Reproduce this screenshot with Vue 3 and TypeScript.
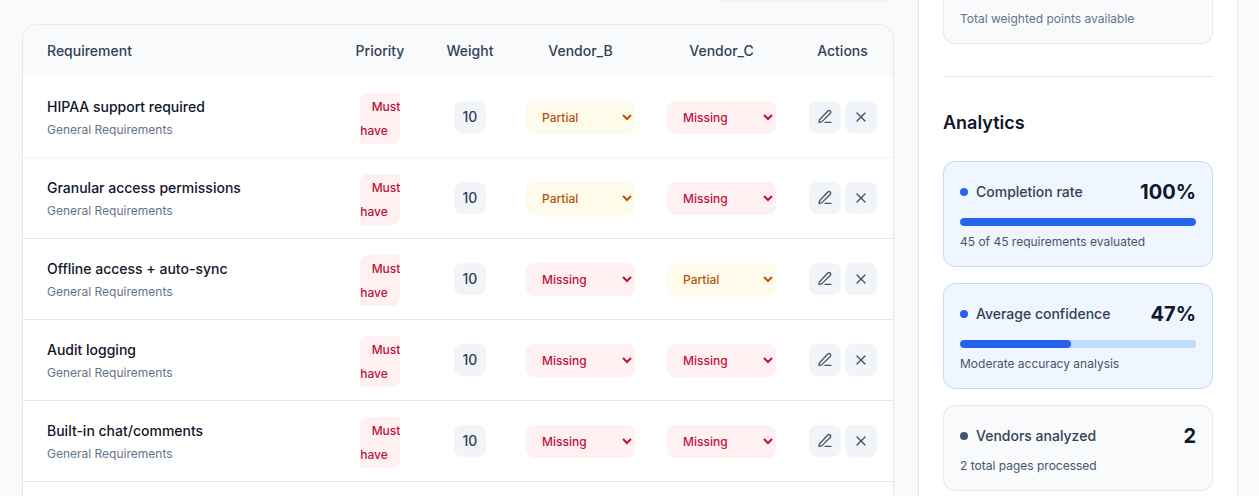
<script setup lang="ts">
import { ref } from 'vue'

type Status = 'Partial' | 'Missing' | 'Met'

interface Requirement {
  title: string
  category: string
  priority: string
  weight: number
  scores: Record<string, Status>
}

interface Metric {
  label: string
  value: string
  note: string
  percent?: number
}

const statuses: Status[] = ['Met', 'Partial', 'Missing']
const vendors = ['Vendor_B', 'Vendor_C']

function requirement(title: string, b: Status, c: Status): Requirement {
  return {
    title,
    category: 'General Requirements',
    priority: 'Must have',
    weight: 10,
    scores: { Vendor_B: b, Vendor_C: c },
  }
}

const requirements = ref<Requirement[]>([
  requirement('HIPAA support required', 'Partial', 'Missing'),
  requirement('Granular access permissions', 'Partial', 'Missing'),
  requirement('Offline access + auto-sync', 'Missing', 'Partial'),
  requirement('Audit logging', 'Missing', 'Missing'),
  requirement('Built-in chat/comments', 'Missing', 'Missing'),
])

const metrics: Metric[] = [
  { label: 'Completion rate', value: '100%', note: '45 of 45 requirements evaluated', percent: 100 },
  { label: 'Average confidence', value: '47%', note: 'Moderate accuracy analysis', percent: 47 },
  { label: 'Vendors analyzed', value: '2', note: '2 total pages processed' },
]

function remove(index: number) {
  requirements.value.splice(index, 1)
}
</script>

<template>
  <div class="page">
    <main class="main">
      <div class="toolbar"><div class="toolbar-edge"></div></div>
      <section class="table-card">
        <table>
          <colgroup>
            <col />
            <col class="col-priority" />
            <col class="col-weight" />
            <col v-for="v in vendors" :key="v" class="col-vendor" />
            <col class="col-actions" />
          </colgroup>
          <thead>
            <tr>
              <th class="first" scope="col">Requirement</th>
              <th scope="col">Priority</th>
              <th scope="col">Weight</th>
              <th v-for="v in vendors" :key="v" scope="col">{{ v }}</th>
              <th scope="col">Actions</th>
            </tr>
          </thead>
          <tbody>
            <tr v-for="(r, i) in requirements" :key="r.title">
              <td class="first">
                <div class="title">{{ r.title }}</div>
                <div class="category">{{ r.category }}</div>
              </td>
              <td class="priority-cell"><span class="priority">{{ r.priority }}</span></td>
              <td><div class="weight">{{ r.weight }}</div></td>
              <td v-for="v in vendors" :key="v">
                <select
                  v-model="r.scores[v]"
                  class="status"
                  :class="r.scores[v].toLowerCase()"
                  :aria-label="`${v}: ${r.title}`"
                >
                  <option v-for="s in statuses" :key="s" :value="s">{{ s }}</option>
                </select>
              </td>
              <td>
                <div class="actions">
                  <button type="button" :aria-label="`Edit ${r.title}`">
                    <svg viewBox="0 0 24 24" aria-hidden="true">
                      <path d="M12 20h9" />
                      <path d="M16.1 3.1a2.6 2.6 0 0 1 3.7 3.7L7 19.3l-4 .9.9-4Z" />
                    </svg>
                  </button>
                  <button type="button" :aria-label="`Remove ${r.title}`" @click="remove(i)">
                    <svg viewBox="0 0 24 24" aria-hidden="true">
                      <path d="M18 6 6 18" />
                      <path d="m6 6 12 12" />
                    </svg>
                  </button>
                </div>
              </td>
            </tr>
          </tbody>
        </table>
      </section>
    </main>

    <aside class="sidebar">
      <div class="metric summary">
        <p class="note">Total weighted points available</p>
      </div>
      <section class="analytics">
        <h2>Analytics</h2>
        <div class="metrics">
          <div
            v-for="m in metrics"
            :key="m.label"
            class="metric"
            :class="{ highlighted: m.percent !== undefined }"
          >
            <div class="metric-head">
              <span class="dot"></span>
              <span class="metric-label">{{ m.label }}</span>
              <strong>{{ m.value }}</strong>
            </div>
            <div
              v-if="m.percent !== undefined"
              class="bar"
              role="progressbar"
              :aria-label="m.label"
              :aria-valuenow="m.percent"
              aria-valuemin="0"
              aria-valuemax="100"
            >
              <div class="bar-fill" :style="{ width: m.percent + '%' }"></div>
            </div>
            <p class="note">{{ m.note }}</p>
          </div>
        </div>
      </section>
    </aside>
  </div>
</template>

<style>
body {
  margin: 0;
  background: #f8fafc;
}
</style>

<style scoped>
.page,
.page * {
  box-sizing: border-box;
}

.page {
  display: flex;
  gap: 24px;
  height: 100vh;
  padding: 0 21px 0 22px;
  overflow: hidden;
  background: #f8fafc;
  color: #0f172a;
  font-family: Inter, 'Liberation Sans', sans-serif;
  font-size: 14px;
  line-height: 20px;
}

.main {
  display: flex;
  flex: 1;
  flex-direction: column;
  min-width: 0;
}

.toolbar {
  display: flex;
  flex: none;
  justify-content: flex-end;
  height: 24px;
  padding-right: 4px;
}

.toolbar-edge {
  width: 176px;
  height: 1px;
  border-radius: 0 0 8px 8px;
  background: #f1f3f6;
}

.table-card {
  flex: 1 0 auto;
  overflow: hidden;
  border: 1px solid #e2e8f0;
  border-bottom: 0;
  border-radius: 16px 16px 0 0;
  background: #fff;
}

table {
  width: 100%;
  border-spacing: 0;
  table-layout: fixed;
}

.col-priority {
  width: 100px;
}

.col-weight {
  width: 80px;
}

.col-vendor {
  width: 141px;
}

.col-actions {
  width: 101px;
}

th {
  padding: 16px;
  background: #f8fafc;
  color: #334155;
  font-weight: 500;
  text-align: center;
}

td {
  height: 81px;
  padding: 16px;
  border-bottom: 1px solid #e5e7eb;
  text-align: center;
  vertical-align: middle;
}

tbody tr:first-child td {
  border-bottom-color: #f1f5f9;
}

th.first,
td.first {
  padding-left: 24px;
  text-align: left;
}

td.first {
  padding-top: 18px;
}

.title {
  font-weight: 500;
  line-height: 24px;
}

.category {
  color: #64748b;
  font-size: 12px;
  line-height: 22px;
}

.priority-cell {
  padding: 18px 24px 14px;
  font-size: 12px;
  font-weight: 500;
  line-height: 24px;
}

.priority {
  padding: 6px 12px;
  border-radius: 8px;
  background: #fff1f2;
  color: #be123c;
}

.weight {
  width: 32px;
  margin: 0 auto;
  border-radius: 8px;
  background: #f1f5f9;
  color: #334155;
  font-weight: 500;
  line-height: 32px;
}

.status {
  display: block;
  width: 100%;
  height: 33px;
  padding: 8px 12px;
  border: 0;
  border-radius: 8px;
  font-family: inherit;
  font-size: 12px;
  font-weight: 500;
}

.partial {
  background-color: #fffbeb;
  color: #b45309;
}

.missing {
  background-color: #fff1f2;
  color: #be123c;
}

.met {
  background-color: #ecfdf5;
  color: #047857;
}

.actions {
  display: flex;
  justify-content: center;
  gap: 4px;
}

.actions button {
  display: grid;
  flex: none;
  width: 32px;
  height: 32px;
  padding: 0;
  border: 0;
  border-radius: 8px;
  background: #f1f5f9;
  color: #475569;
  place-items: center;
}

.actions svg {
  width: 16px;
  height: 16px;
  fill: none;
  stroke: currentColor;
  stroke-linecap: round;
  stroke-linejoin: round;
  stroke-width: 2;
}

.sidebar {
  flex: none;
  width: 320px;
  padding: 0 24px;
  border: solid #e2e8f0;
  border-width: 0 1px;
  background: #fff;
}

.metric {
  padding: 16px;
  border: 1px solid #e2e8f0;
  border-radius: 12px;
  background: #f8fafc;
}

.metric.highlighted {
  border-color: #bfdbfe;
  background: #eff6ff;
}

.metric.summary {
  padding: 3px 16px 16px;
  border-top: 0;
  border-radius: 0 0 12px 12px;
}

.note {
  margin: 8px 0 0;
  color: #475569;
  font-size: 12px;
  line-height: 16px;
}

.summary .note {
  color: #64748b;
}

.analytics {
  margin-top: 32px;
  padding-top: 32px;
  border-top: 1px solid #e2e8f0;
}

h2 {
  margin: 0 0 24px;
  font-size: 18px;
  font-weight: 600;
  line-height: 28px;
}

.metrics {
  display: grid;
  gap: 16px;
}

.metric-head {
  display: flex;
  align-items: center;
  gap: 8px;
  line-height: 28px;
}

.dot {
  width: 8px;
  height: 8px;
  border-radius: 50%;
  background: #475569;
}

.highlighted .dot {
  background: #2563eb;
}

.metric-label {
  flex: 1;
  color: #334155;
  font-weight: 500;
}

.metric-head strong {
  font-size: 20px;
  font-weight: 700;
}

.bar {
  height: 8px;
  margin-top: 12px;
  overflow: hidden;
  border-radius: 4px;
  background: #bfdbfe;
}

.bar-fill {
  height: 100%;
  border-radius: 4px;
  background: #2563eb;
}
</style>
